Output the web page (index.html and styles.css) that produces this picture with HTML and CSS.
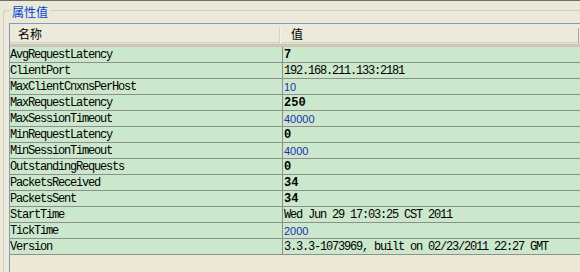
FILE: index.html
```html
<!DOCTYPE html>
<html lang="zh">
<head>
<meta charset="utf-8">
<title>属性值</title>
<link rel="stylesheet" href="styles.css">
</head>
<body>
<div class="topline"></div>
<div class="group">
  <div class="legend">属性值</div>
  <div class="list">
    <div class="header">
      <div class="hcell hname"><span class="htext">名称</span><span class="divider"></span></div>
      <div class="hcell hvalue"><span class="htext">值</span><span class="divider dark"></span></div>
      <div class="hcell hfill"></div>
    </div>
    <div class="rows">
      <div class="cell name">AvgRequestLatency</div><div class="cell val bold">7</div>
      <div class="cell name">ClientPort</div><div class="cell val mono">192.168.211.133:2181</div>
      <div class="cell name">MaxClientCnxnsPerHost</div><div class="cell val num">10</div>
      <div class="cell name">MaxRequestLatency</div><div class="cell val bold">250</div>
      <div class="cell name">MaxSessionTimeout</div><div class="cell val num">40000</div>
      <div class="cell name">MinRequestLatency</div><div class="cell val bold">0</div>
      <div class="cell name">MinSessionTimeout</div><div class="cell val num">4000</div>
      <div class="cell name">OutstandingRequests</div><div class="cell val bold">0</div>
      <div class="cell name">PacketsReceived</div><div class="cell val bold">34</div>
      <div class="cell name">PacketsSent</div><div class="cell val bold">34</div>
      <div class="cell name">StartTime</div><div class="cell val mono">Wed Jun 29 17:03:25 CST 2011</div>
      <div class="cell name">TickTime</div><div class="cell val num">2000</div>
      <div class="cell name">Version</div><div class="cell val mono">3.3.3-1073969, built on 02/23/2011 22:27 GMT</div>
    </div>
  </div>
</div>
</body>
</html>
```
FILE: styles.css
```css
html, body {
  margin: 0;
  padding: 0;
}
body {
  width: 580px;
  height: 272px;
  overflow: hidden;
  background: #ece9d8;
  font-family: "Noto Sans CJK SC", "Liberation Sans", sans-serif;
}
.topline {
  height: 1px;
  background: #6f6e68;
}
.group {
  position: relative;
  margin: 9px 0 0 3px;
  width: 577px;
  height: 262px;
  border-top: 1px solid #d0d0bf;
  border-left: 1px solid #d0d0bf;
  border-top-left-radius: 3px;
  padding: 12px 0 0 5px;
  box-sizing: border-box;
}
.legend {
  position: absolute;
  top: -7px;
  left: 6px;
  padding: 0 2px;
  background: #ece9d8;
  color: #0046d5;
  font-size: 12px;
  line-height: 16px;
}
.list {
  border-left: 1px solid #7f9db9;
  border-top: 1px solid #7f9db9;
  height: 100%;
  background: #ece9d8;
  box-sizing: border-box;
  overflow: hidden;
}
.header {
  display: flex;
  height: 23px;
  background: #ebeadb;
  border-bottom: 3px solid #cbc7b8;
  box-shadow: inset 0 -1px 0 #e2decd, inset 0 -2px 0 #d6d2c2;
  box-sizing: border-box;
}
.hcell {
  display: flex;
  align-items: center;
  height: 19px;
  font-size: 12px;
  color: #000;
  box-sizing: border-box;
  flex-shrink: 0;
}
.hname {
  width: 273px;
  padding-left: 8px;
}
.hvalue {
  width: 297px;
  padding-left: 8px;
}
.hfill {
  flex: 1 1 auto;
}
.htext {
  line-height: 19px;
}
.divider {
  margin-left: auto;
  margin-right: 2px;
  margin-top: 3px;
  width: 1px;
  height: 15px;
  background: #f4f3ee;
  box-shadow: -1px 0 0 #d6d2c2;
}
.divider.dark {
  margin-right: 1px;
  background: #a8a699;
  box-shadow: none;
}
.rows {
  display: grid;
  grid-template-columns: 273px 1fr;
  grid-auto-rows: 16px;
}
.cell {
  background: #cce8cc;
  border-bottom: 1px solid #8c8f8c;
  box-sizing: border-box;
  height: 16px;
  padding-top: 1px;
  line-height: 15px;
  white-space: nowrap;
  overflow: hidden;
  color: #000;
}
.name {
  border-right: 1px solid #8c8f8c;
  padding-left: 0;
  font-family: "Liberation Mono", monospace;
  font-size: 12px;
  letter-spacing: -1.2px;
}
.val {
  padding-left: 1px;
}
.mono {
  font-family: "Liberation Mono", monospace;
  font-size: 12px;
  letter-spacing: -1.2px;
}
.bold {
  font-family: "Liberation Mono", monospace;
  font-weight: bold;
  font-size: 12px;
}
.num {
  font-family: "Liberation Sans", sans-serif;
  font-size: 11px;
  color: #1c2fb0;
}
```
